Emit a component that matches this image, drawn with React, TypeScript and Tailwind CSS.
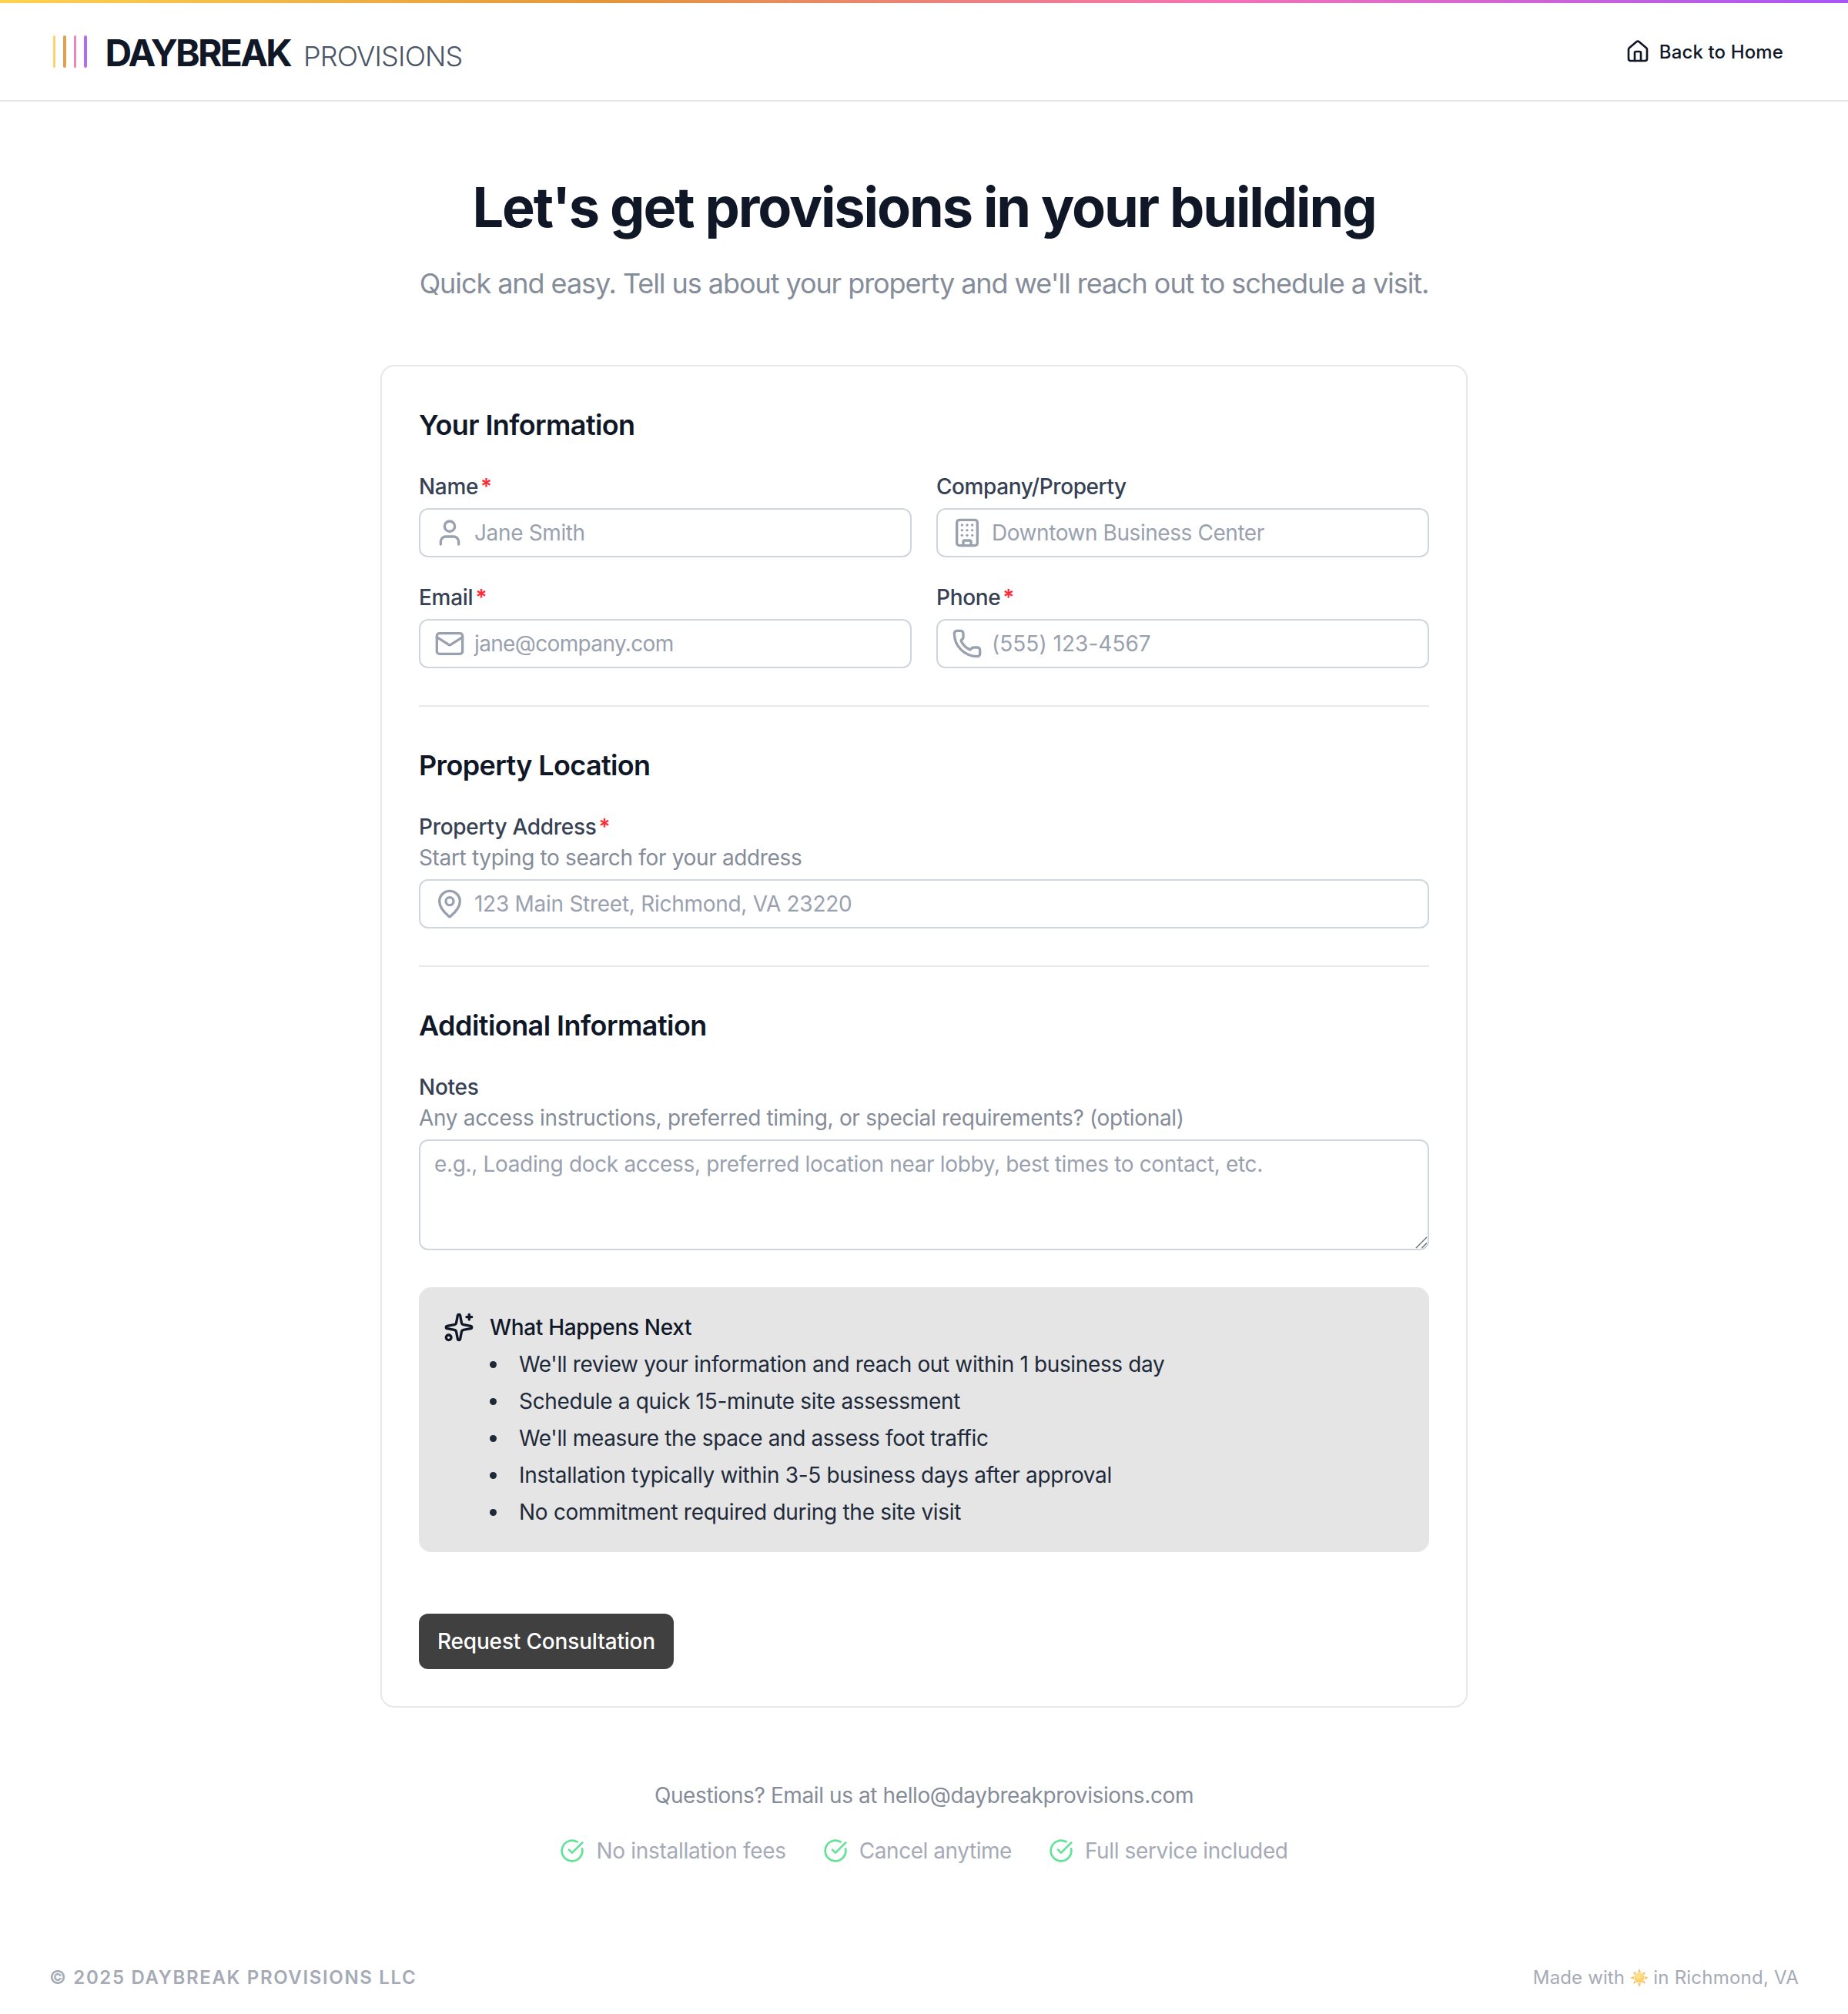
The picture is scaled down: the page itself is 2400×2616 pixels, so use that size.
import type { ReactNode } from "react";
import { Building, CircleCheckBig, House, Mail, MapPin, Phone, Sparkles, User } from "lucide-react";

function Label({ children, required, className = "" }: { children: ReactNode; required?: boolean; className?: string }) {
  return (
    <div className="flex h-10 items-center text-[28px] leading-10 font-medium text-[#364153]">
      <span className={className}>{children}</span>
      {required && <span className="ml-[3px] font-semibold text-[#fb2c36]">*</span>}
    </div>
  );
}

function Hint({ children, className }: { children: ReactNode; className: string }) {
  return <p className={`text-[28px] leading-10 text-[#858c99] ${className}`}>{children}</p>;
}

function Input({ icon: Icon, placeholder, className }: { icon: typeof User; placeholder: string; className: string }) {
  return (
    <div className="mt-2 flex h-16 items-center rounded-[12px] border-2 border-[#d1d5dc] bg-white pl-[18px] text-[28px] text-[#99a1af]">
      <Icon size={40} strokeWidth={2} className="shrink-0" />
      <span className={`ml-3 whitespace-nowrap leading-10 ${className}`}>{placeholder}</span>
    </div>
  );
}

function SectionTitle({ children, className }: { children: ReactNode; className: string }) {
  return <h2 className={`mb-8 text-[36px] leading-[56px] font-semibold text-[#101828] ${className}`}>{children}</h2>;
}

function Divider() {
  return <div className="my-12 h-0.5 bg-gray-200" />;
}

function Sun() {
  const rays = [0, 45, 90, 135, 180, 225, 270, 315];
  return (
    <svg viewBox="-12 -12 24 24" className="ml-[7px] mr-[6px] h-6 w-6 opacity-75">
      <defs>
        <radialGradient id="sun" cx="0.45" cy="0.35" r="0.7">
          <stop offset="0" stopColor="#ffe566" />
          <stop offset="1" stopColor="#fbae2c" />
        </radialGradient>
      </defs>
      {rays.map((a) => (
        <path key={a} d={a % 90 === 0 ? "M-2.1 -7.2L0 -11.8L2.1 -7.2Z" : "M-2 -7L0 -11L2 -7Z"} fill="#f5a93a" transform={`rotate(${a})`} />
      ))}
      <circle r="6.4" fill="url(#sun)" />
    </svg>
  );
}

const steps: [string, string][] = [
  ["We'll review your information and reach out within 1 business day", "tracking-[-0.013em]"],
  ["Schedule a quick 15-minute site assessment", "tracking-[-0.011em]"],
  ["We'll measure the space and assess foot traffic", "tracking-[-0.013em]"],
  ["Installation typically within 3-5 business days after approval", "tracking-[-0.0117em]"],
  ["No commitment required during the site visit", "tracking-[-0.0105em]"],
];

const perks: [string, string][] = [
  ["No installation fees", "tracking-[-0.0104em]"],
  ["Cancel anytime", "tracking-[-0.0165em]"],
  ["Full service included", "tracking-[-0.0135em]"],
];

export default function App() {
  return (
    <div className="flex h-[2616px] w-[2400px] flex-col bg-white font-['Inter',sans-serif]">
      <div className="h-1 bg-[linear-gradient(90deg,#ffd250,#e4953a_33.3%,#f472b6_66.6%,#a855f7)]" />
      <header className="flex h-32 items-center justify-between border-b-2 border-gray-200 pr-[84px] pl-[68.5px]">
        <div className="flex items-center">
          <div className="flex h-[42px] gap-[10px]">
            <span className="w-[3.5px] rounded-full bg-[#fcd56a]" />
            <span className="w-[3.5px] rounded-full bg-[#e0a050]" />
            <span className="w-[3.5px] rounded-full bg-[#f083b8]" />
            <span className="w-[3.5px] rounded-full bg-[#b06cf5]" />
          </div>
          <div className="mt-[3px] ml-[24px] flex items-baseline">
            <span className="text-[48px] leading-[64px] font-bold tracking-[-0.0575em] text-[#101828]">DAYBREAK</span>
            <span className="ml-[17px] text-[36px] leading-[56px] font-[350] tracking-[-0.023em] text-[#4a5565]">PROVISIONS</span>
          </div>
        </div>
        <a className="flex items-center text-[24px] leading-8 font-medium text-[#101828]">
          <House size={32} strokeWidth={2} className="mr-[12px]" />
          <span className="mt-[2px] tracking-[0.0054em]">Back to Home</span>
        </a>
      </header>

      <main className="flex flex-col items-center">
        <h1 className="mt-[101px] text-[72px] leading-[72px] font-bold tracking-[-0.0292em] whitespace-nowrap text-[#101828]">
          Let's get provisions in your building
        </h1>
        <p className="mt-[35px] text-[36px] leading-[56px] tracking-[-0.0296em] whitespace-nowrap text-[#858d9a]">
          Quick and easy. Tell us about your property and we'll reach out to schedule a visit.
        </p>

        <section className="mt-[78px] w-[1412px] rounded-[18px] border-2 border-gray-200 p-12">
          <SectionTitle className="tracking-[-0.017em]">Your Information</SectionTitle>
          <div className="grid grid-cols-2 gap-8">
            <div>
              <Label required className="tracking-[-0.012em]">Name</Label>
              <Input icon={User} placeholder="Jane Smith" className="tracking-[-0.013em]" />
            </div>
            <div>
              <Label className="tracking-[-0.015em]">Company/Property</Label>
              <Input icon={Building} placeholder="Downtown Business Center" className="tracking-[-0.0155em]" />
            </div>
            <div>
              <Label required className="tracking-[-0.01em]">Email</Label>
              <Input icon={Mail} placeholder="jane@company.com" className="tracking-[-0.023em]" />
            </div>
            <div>
              <Label required className="tracking-[-0.012em]">Phone</Label>
              <Input icon={Phone} placeholder="(555) 123-4567" className="tracking-[0.001em]" />
            </div>
          </div>

          <Divider />

          <SectionTitle className="tracking-[-0.018em]">Property Location</SectionTitle>
          <Label required className="tracking-[-0.01em]">Property Address</Label>
          <Hint className="tracking-[-0.0122em]">Start typing to search for your address</Hint>
          <Input icon={MapPin} placeholder="123 Main Street, Richmond, VA 23220" className="tracking-[-0.0097em]" />

          <Divider />

          <SectionTitle className="tracking-[-0.0155em]">Additional Information</SectionTitle>
          <Label className="tracking-[-0.01em]">Notes</Label>
          <Hint className="tracking-[-0.0114em]">Any access instructions, preferred timing, or special requirements? (optional)</Hint>
          <div className="relative mt-2 h-36 rounded-[12px] border-2 border-[#d1d5dc] px-[18px] py-[10px] text-[28px] leading-10 tracking-[-0.0122em] text-[#99a1af]">
            e.g., Loading dock access, preferred location near lobby, best times to contact, etc.
            <svg viewBox="0 0 16 16" className="absolute right-0 bottom-0 h-4 w-4" stroke="#6b6b6b" strokeWidth="1.4">
              <path d="M1 15L15 1M8.5 15L15 8.5" />
            </svg>
          </div>

          <div className="mt-12 flex rounded-[16px] bg-[#e5e5e5] p-8">
            <Sparkles size={40} strokeWidth={2} className="shrink-0 text-[#101828]" />
            <div className="ml-5 text-[28px] leading-10">
              <h3 className="font-medium tracking-[-0.0115em] text-[#101828]">What Happens Next</h3>
              <ul className="mt-2 flex flex-col gap-2 text-[#1e2939]">
                {steps.map(([text, tracking]) => (
                  <li key={text} className="flex items-center">
                    <span className="h-[9px] w-[9px] rounded-full bg-[#1e2939]" />
                    <span className={`ml-[29px] ${tracking}`}>{text}</span>
                  </li>
                ))}
              </ul>
            </div>
          </div>

          <button className="mt-20 flex h-[72px] w-[331px] items-center justify-center rounded-[12px] bg-[#404040] text-[28px] font-medium tracking-[-0.006em] text-white">
            Request Consultation
          </button>
        </section>

        <p className="mt-[94px] text-[28px] leading-10 tracking-[-0.0142em] text-[#858c99]">
          Questions? Email us at hello@daybreakprovisions.com
        </p>
        <div className="mt-8 flex gap-12 text-[28px] leading-10 text-[#a5abb6]">
          {perks.map(([perk, tracking]) => (
            <div key={perk} className="flex items-center gap-[15px]">
              <CircleCheckBig size={32} strokeWidth={2} className="text-[#62e296]" />
              <span className={tracking}>{perk}</span>
            </div>
          ))}
        </div>
      </main>

      <footer className="mt-auto mb-[31px] flex items-center justify-between px-16 text-[24px] leading-8 text-[#a5abb6]">
        <span className="font-semibold tracking-[0.0687em]">© 2025 DAYBREAK PROVISIONS LLC</span>
        <span className="flex items-center">
          <span className="tracking-[0.006em]">Made with</span>
          <Sun />
          <span className="tracking-[0.0096em]">in Richmond, VA</span>
        </span>
      </footer>
    </div>
  );
}
